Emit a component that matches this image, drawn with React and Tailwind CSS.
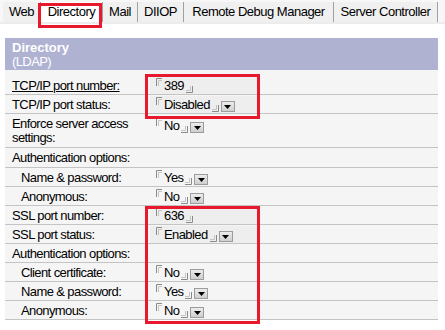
import React from 'react';

const tabs = [
  { name: 'Web', w: 'w-[38px]' },
  { name: 'Directory', w: 'w-[62px]' },
  { name: 'Mail', w: 'w-[35px]' },
  { name: 'DIIOP', w: 'w-[46px]' },
  { name: 'Remote Debug Manager', w: 'w-[150px]' },
  { name: 'Server Controller', w: 'w-[104px]' },
];

function OpenMark() {
  return (
    <svg width="6" height="8" viewBox="0 0 6 8" className="self-start mt-[1px] mr-[2px] shrink-0">
      <path d="M0.5 8 V0.5 H6" fill="none" stroke="#8a8a8a" strokeWidth="1" />
      <path d="M2.5 8 V2.5 H6" fill="none" stroke="#c4c4c4" strokeWidth="1" />
    </svg>
  );
}

function CloseMark() {
  return (
    <svg width="7" height="7" viewBox="0 0 7 7" className="self-end mb-[1px] ml-[2px] shrink-0">
      <path d="M0 6.5 H6.5 V0" fill="none" stroke="#8a8a8a" strokeWidth="1" />
      <path d="M0 4.5 H4.5 V0" fill="none" stroke="#c4c4c4" strokeWidth="1" />
    </svg>
  );
}

function DropBtn() {
  return (
    <span className="ml-[2px] flex h-[11px] w-[14px] items-center justify-center self-end mb-[1px] border border-[#9c9c9c] bg-gradient-to-b from-[#ececec] to-[#cfcfcf]">
      <svg width="7" height="4" viewBox="0 0 7 4">
        <path d="M0 0 H7 L3.5 4 Z" fill="#000" />
      </svg>
    </span>
  );
}

function Field({ value, drop }) {
  return (
    <div className="flex h-[17px] items-stretch">
      <OpenMark />
      <span className="leading-[17px]">{value}</span>
      <CloseMark />
      {drop && <DropBtn />}
    </div>
  );
}

const rows = [
  { label: 'TCP/IP port number:', value: '389', underline: true, shade: true },
  { label: 'TCP/IP port status:', value: 'Disabled', drop: true, shade: true },
  { label: 'Enforce server access settings:', value: 'No', drop: true, tall: true },
  { label: 'Authentication options:', h: 'h-[20px]' },
  { label: 'Name & password:', value: 'Yes', drop: true, indent: true },
  { label: 'Anonymous:', value: 'No', drop: true, indent: true },
  { label: 'SSL port number:', value: '636', shade: true },
  { label: 'SSL port status:', value: 'Enabled', drop: true, shade: true },
  { label: 'Authentication options:' },
  { label: 'Client certificate:', value: 'No', drop: true, indent: true },
  { label: 'Name & password:', value: 'Yes', drop: true, indent: true },
  { label: 'Anonymous:', value: 'No', drop: true, indent: true },
];

export default function App() {
  return (
    <div className="relative h-[330px] w-[445px] overflow-hidden bg-white text-[13px] tracking-[-0.6px] text-black" style={{ fontFamily: '"Liberation Sans", Arial, sans-serif' }}>
      {/* tab strip */}
      <div className="flex h-[24px] items-end border-b-2 border-[#ececec] bg-[#f7f7f7] pl-[3px] tracking-[-0.5px]">
        {tabs.map((t) => (
          <div
            key={t.name}
            className={`flex h-[20px] shrink-0 items-center justify-center whitespace-nowrap border-r border-[#a0a0a0] ${t.w} ${t.name === 'Directory' ? 'bg-white' : 'bg-[#f0f0f0]'}`}
          >
            {t.name}
          </div>
        ))}
      </div>

      {/* panel */}
      <div className="mx-[5px] mt-[14px] w-[433px]">
        <div className="h-[32px] bg-[#b0b2d2] px-[7px] pt-[3px] text-white">
          <div className="font-bold leading-[14px] tracking-normal">Directory</div>
          <div className="leading-[14px]">(LDAP)</div>
        </div>
        <div className="bg-[#f5f5f5] pt-[6px]">
          {rows.map((r, i) => (
            <div key={i} className={`flex border-b border-[#c4c4c4] ${r.tall ? 'h-[34px] pt-[3px]' : `${r.h || 'h-[19px]'} items-center pt-[1px]`}`}>
              <div className={`w-[145px] shrink-0 leading-[14px] ${r.indent ? 'pl-[16px]' : 'pl-[7px]'}`}>
                <span className={r.underline ? 'underline' : ''}>{r.label}</span>
              </div>
              {r.value && (
                <div className={`pl-[6px] ${r.shade ? 'flex w-[110px] items-center self-stretch bg-[#eeeeee]' : 'self-start'}`}>
                  <Field value={r.value} drop={r.drop} />
                </div>
              )}
            </div>
          ))}
        </div>
      </div>

      {/* red annotation boxes */}
      <div className="absolute left-[38px] top-[3px] h-[25px] w-[64px] border-[3px] border-[#e8192c]" />
      <div className="absolute left-[145px] top-[74px] h-[45px] w-[115px] border-[3px] border-[#e8192c]" />
      <div className="absolute left-[145px] top-[206px] h-[118px] w-[115px] border-[3px] border-[#e8192c]" />
    </div>
  );
}
